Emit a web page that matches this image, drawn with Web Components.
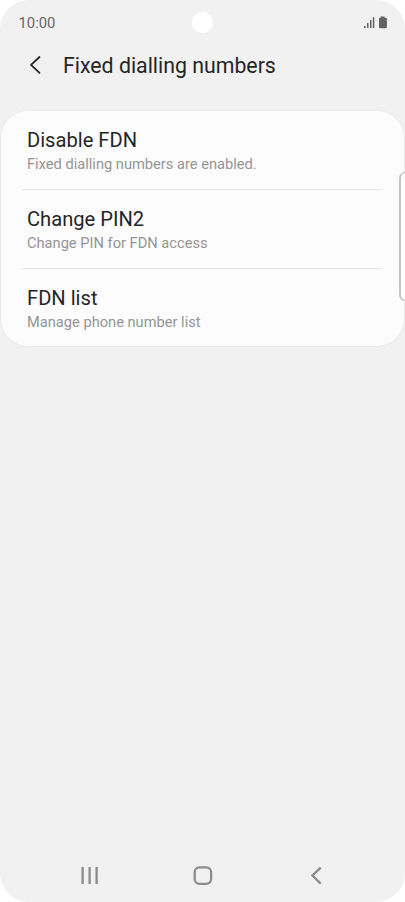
<!DOCTYPE html>
<html lang="en">
<head>
<meta charset="utf-8">
<title>Fixed dialling numbers</title>
<style>
body { margin: 0; background: #fff; font-family: Roboto, "Liberation Sans", sans-serif; overflow: hidden; }
</style>
</head>
<body>
<phone-screen>
  <status-bar slot="status" time="10:00"></status-bar>
  <page-header slot="header">Fixed dialling numbers</page-header>
  <settings-card>
    <settings-row><span slot="title">Disable FDN</span><span slot="note">Fixed dialling numbers are enabled.</span></settings-row>
    <settings-row><span slot="title">Change PIN2</span><span slot="note">Change PIN for FDN access</span></settings-row>
    <settings-row><span slot="title">FDN list</span><span slot="note">Manage phone number list</span></settings-row>
  </settings-card>
  <nav-bar slot="nav"></nav-bar>
</phone-screen>
<script>
function define(name, html, setup) {
  customElements.define(name, class extends HTMLElement {
    constructor() {
      super();
      this.attachShadow({ mode: 'open' }).innerHTML = html;
      if (setup) setup(this);
    }
  });
}

define('phone-screen', `
<style>
:host { position: relative; display: flex; flex-direction: column; width: 405px; height: 902px; background: #f1f1f1; border-radius: 29px; overflow: hidden; }
main { flex: 1; }
.edge { position: absolute; left: 399px; top: 172px; width: 20px; height: 129px; box-sizing: border-box; border: 1px solid #b4b4b4; border-left: 2px solid #c6c6c6; border-radius: 6px; background: #fcfcfc; }
</style>
<slot name="status"></slot><slot name="header"></slot><main><slot></slot></main><slot name="nav"></slot><div class="edge"></div>`);

define('status-bar', `
<style>
:host { display: grid; grid-template-columns: 1fr 21px 1fr; align-items: center; height: 44px; padding: 0 18px; box-sizing: border-box; color: #666; }
.time { font-size: 14.8px; line-height: 18px; padding: 2px 0 0 .5px; }
.camera { width: 21px; height: 21px; border-radius: 50%; background: #fff; }
svg { justify-self: end; display: block; }
</style>
<span class="time"></span><span class="camera"></span>
<svg width="24" height="14" viewBox="363 15 24 14" fill="#626262">
  <path d="M364 26h1.5v2H364zM367 23h1.5v5H367zM370 20h1.5v8H370zM372.8 17.3h1.5V28h-1.5z"/>
  <path d="M380.6 16.4h4v1.3h1.3q1 0 1 1V27.2q0 1-1 1H380q-1 0-1-1V18.7q0-1 1-1h.6z"/>
</svg>`, el => { el.shadowRoot.querySelector('.time').textContent = el.getAttribute('time'); });

define('page-header', `
<style>
:host { display: flex; align-items: center; height: 66px; padding: 0 27px 22px; box-sizing: border-box; color: #252525; font-size: 21.3px; line-height: 26px; }
svg { width: 36px; height: 24px; flex: none; }
</style>
<svg viewBox="27 54 36 24" fill="none" stroke="#252525" stroke-width="1.8" stroke-linecap="round" stroke-linejoin="round"><path d="M39.5 57L31 64.9L39.5 72.8"/></svg>
<span><slot></slot></span>`);

define('settings-card', `
<style>
:host { display: block; height: 237px; box-sizing: border-box; background: #fcfcfc; border: 1px solid #e9e9e9; border-radius: 28px; overflow: hidden; }
</style><slot></slot>`);

define('settings-row', `
<style>
:host { display: flex; flex-direction: column; height: 79px; margin: 0 22px 0 21px; padding: 17px 5px 0; box-sizing: border-box; border-bottom: 1.5px solid #e6e6e6; }
:host(:last-of-type) { border-bottom: 0; }
.title { font-size: 20.15px; line-height: 24px; color: #252525; }
.note { font-size: 14.65px; line-height: 18px; margin-top: 3px; color: #959595; }
</style>
<span class="title"><slot name="title"></slot></span><span class="note"><slot name="note"></slot></span>`);

define('nav-bar', `
<style>
:host { display: flex; justify-content: space-between; align-items: center; height: 54px; padding: 0 77px; box-sizing: border-box; }
svg { display: block; width: 24px; height: 24px; fill: none; stroke: #8b8b8b; stroke-width: 2.3; }
</style>
<svg viewBox="77 863 24 24"><path d="M82.6 867v17M89.6 867v17M96.6 867v17"/></svg>
<svg viewBox="190.5 863 24 24"><rect x="194.2" y="867.4" width="16.4" height="16.4" rx="4.8"/></svg>
<svg viewBox="304 863 24 24"><path d="M320.7 867.6L312.4 875.6L320.7 883.6"/></svg>`);
</script>
</body>
</html>
